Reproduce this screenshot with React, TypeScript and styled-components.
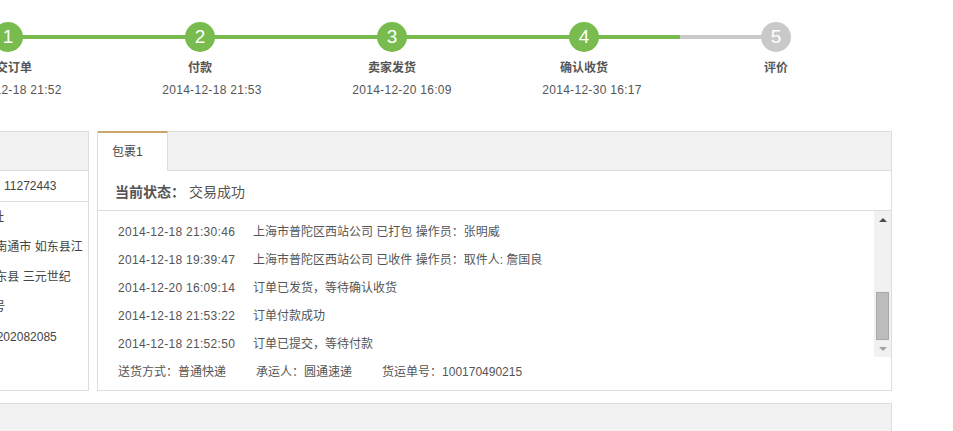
import React from 'react';
import styled, { createGlobalStyle } from 'styled-components';

const GlobalStyle = createGlobalStyle`
  html, body { margin: 0; padding: 0; background: #fff; }
  body {
    font-family: "Liberation Sans", Arial, "Noto Sans CJK SC", sans-serif;
    font-size: 12px;
    color: #555;
    overflow: hidden;
  }
  * { box-sizing: border-box; }
`;

const GREEN = '#78bb4f';
const GREY = '#c9c9c9';
const BORDER = '#dddddd';

const Page = styled.div`
  width: 980px;
  margin-left: -88px;
  padding-top: 22px;
`;

/* ---------- progress steps ---------- */
type Seg = 'done' | 'todo' | 'none';

const Steps = styled.ol`
  display: flex;
  width: 960px;
  margin: 0;
  padding: 0;
  list-style: none;
`;

const segColor = (s: Seg) => (s === 'done' ? GREEN : s === 'todo' ? GREY : 'transparent');

const Step = styled.li<{ $left: Seg; $right: Seg }>`
  position: relative;
  flex: 0 0 192px;
  display: flex;
  flex-direction: column;
  align-items: center;

  &::before,
  &::after {
    content: '';
    position: absolute;
    top: 13px;
    height: 4px;
    width: 50%;
  }
  &::before { left: 0; background: ${(p) => segColor(p.$left)}; }
  &::after { left: 50%; background: ${(p) => segColor(p.$right)}; }
`;

const Circle = styled.span<{ $done: boolean }>`
  position: relative;
  z-index: 1;
  width: 30px;
  height: 30px;
  border-radius: 50%;
  background: ${(p) => (p.$done ? GREEN : GREY)};
  color: #fff;
  font-family: "Liberation Sans", Arial, sans-serif;
  font-size: 19px;
  line-height: 30px;
  text-align: center;
`;

const StepTitle = styled.div`
  margin-top: 7px;
  line-height: 18px;
  font-weight: bold;
  color: #555;
  white-space: nowrap;
`;

const StepDate = styled.div<{ $shift: number }>`
  margin-top: 4px;
  margin-left: ${(p) => p.$shift * 2}px;
  line-height: 18px;
  color: #555;
  letter-spacing: 0.3px;
  white-space: nowrap;
  min-height: 18px;
`;

/* ---------- panels ---------- */
const Columns = styled.div`
  display: flex;
  gap: 8px;
  margin-top: 32px;
  align-items: stretch;
`;

const LeftPanel = styled.section`
  width: 177px;
  flex: 0 0 177px;
  border: 1px solid ${BORDER};
  overflow: hidden;
  color: #444;
`;

const LeftHeader = styled.div`
  height: 39px;
  background: #f2f2f2;
  border-bottom: 1px solid ${BORDER};
  padding-left: 12px;
  line-height: 38px;
  font-weight: bold;
  color: #555;
`;

const LeftRow = styled.div`
  height: 31px;
  line-height: 30px;
  border-bottom: 1px solid ${BORDER};
  padding-left: 43px;
  white-space: nowrap;
`;

const AddressLine = styled.div`
  line-height: 30px;
  padding-left: 43px;
  white-space: nowrap;
`;

const RightPanel = styled.section`
  width: 795px;
  flex: 0 0 795px;
  border: 1px solid ${BORDER};
  border-top: none;
  display: flex;
  flex-direction: column;
  padding-bottom: 3px;
`;

const TabBar = styled.div`
  display: flex;
  height: 40px;
  background: #f2f2f2;
  border-top: 1px solid ${BORDER};
  border-bottom: 1px solid ${BORDER};
`;

const Tab = styled.div<{ $active?: boolean }>`
  width: 70px;
  margin-top: -1px;
  height: 40px;
  padding-left: 14px;
  line-height: 39px;
  background: ${(p) => (p.$active ? '#fff' : 'transparent')};
  border-top: 2px solid ${(p) => (p.$active ? '#c9a46c' : 'transparent')};
  border-right: 1px solid ${BORDER};
  color: #444;
`;

const StatusRow = styled.div`
  display: flex;
  align-items: center;
  gap: 4px;
  height: 40px;
  padding-left: 17px;
  border-bottom: 1px solid ${BORDER};
  font-size: 14px;
  color: #555;
`;

const StatusLabel = styled.span`
  font-weight: bold;
`;

const LogArea = styled.div`
  display: flex;
  height: 147px;
`;

const LogList = styled.ul`
  flex: 1;
  margin: 0;
  padding: 7px 0 0 20px;
  list-style: none;
  overflow: hidden;
`;

const LogRow = styled.li`
  display: grid;
  grid-template-columns: 135px 1fr;
  height: 28px;
  line-height: 28px;
  white-space: nowrap;
  color: #555;
`;

const LogTime = styled.span`
  letter-spacing: 0.3px;
`;

const ScrollBar = styled.div`
  width: 17px;
  display: flex;
  flex-direction: column;
  background: #f1f1f1;
  margin-bottom: 1px;
`;

const ScrollButton = styled.div<{ $dir: 'up' | 'down'; $color: string }>`
  height: 17px;
  display: flex;
  align-items: center;
  justify-content: center;

  &::before {
    content: '';
    width: 0;
    height: 0;
    border-left: 4px solid transparent;
    border-right: 4px solid transparent;
    ${(p) =>
      p.$dir === 'up'
        ? `border-bottom: 4px solid ${p.$color};`
        : `border-top: 4px solid ${p.$color};`}
  }
`;

const ScrollTrack = styled.div`
  flex: 1;
  display: flex;
  flex-direction: column;
  justify-content: flex-end;
  padding: 0 2px;
`;

const ScrollThumb = styled.div`
  height: 48px;
  background: #bcbcbc;
  border: 1px solid #a8a8a8;
`;

const ShipRow = styled.div`
  display: flex;
  gap: 30px;
  height: 29px;
  line-height: 29px;
  padding-left: 20px;
  white-space: nowrap;
  color: #555;
`;

const BottomPanel = styled.section`
  margin-top: 12px;
  height: 40px;
  background: #f2f2f2;
  border: 1px solid ${BORDER};
`;

const steps = [
  { n: 1, title: '提交订单', date: '2014-12-18 21:52', done: true, shift: 4 },
  { n: 2, title: '付款', date: '2014-12-18 21:53', done: true, shift: 12 },
  { n: 3, title: '卖家发货', date: '2014-12-20 16:09', done: true, shift: 10 },
  { n: 4, title: '确认收货', date: '2014-12-30 16:17', done: true, shift: 8 },
  { n: 5, title: '评价', date: '', done: false, shift: 0 },
];

const logs = [
  ['2014-12-18 21:30:46', '上海市普陀区西站公司 已打包 操作员：张明威'],
  ['2014-12-18 19:39:47', '上海市普陀区西站公司 已收件 操作员：取件人: 詹国良'],
  ['2014-12-20 16:09:14', '订单已发货，等待确认收货'],
  ['2014-12-18 21:53:22', '订单付款成功'],
  ['2014-12-18 21:52:50', '订单已提交，等待付款'],
];

export default function App() {
  return (
    <>
      <GlobalStyle />
      <Page>
        <Steps>
          {steps.map((s, i) => {
            const left: Seg = i === 0 ? 'none' : steps[i].done ? 'done' : 'todo';
            const right: Seg = i === steps.length - 1 ? 'none' : steps[i + 1].done || s.done ? 'done' : 'todo';
            return (
              <Step key={s.n} $left={left} $right={right}>
                <Circle $done={s.done}>{s.n}</Circle>
                <StepTitle>{s.title}</StepTitle>
                <StepDate $shift={s.shift}>{s.date}</StepDate>
              </Step>
            );
          })}
        </Steps>

        <Columns>
          <LeftPanel>
            <LeftHeader>订单</LeftHeader>
            <LeftRow>订单号：11272443</LeftRow>
            <AddressLine>收货地址</AddressLine>
            <AddressLine>江苏省 南通市 如东县江</AddressLine>
            <AddressLine>安镇 如东县 三元世纪</AddressLine>
            <AddressLine>花园18号</AddressLine>
            <AddressLine>电话 15202082085</AddressLine>
          </LeftPanel>

          <RightPanel>
            <TabBar>
              <Tab $active>包裹1</Tab>
            </TabBar>
            <StatusRow>
              <StatusLabel>当前状态：</StatusLabel>
              <span>交易成功</span>
            </StatusRow>
            <LogArea>
              <LogList>
                {logs.map(([t, msg]) => (
                  <LogRow key={t}>
                    <LogTime>{t}</LogTime>
                    <span>{msg}</span>
                  </LogRow>
                ))}
              </LogList>
              <ScrollBar>
                <ScrollButton $dir="up" $color="#4a4a4a" />
                <ScrollTrack>
                  <ScrollThumb />
                </ScrollTrack>
                <ScrollButton $dir="down" $color="#a0a0a0" />
              </ScrollBar>
            </LogArea>
            <ShipRow>
              <span>送货方式：普通快递</span>
              <span>承运人：圆通速递</span>
              <span>货运单号：100170490215</span>
            </ShipRow>
          </RightPanel>
        </Columns>

        <BottomPanel />
      </Page>
    </>
  );
}
